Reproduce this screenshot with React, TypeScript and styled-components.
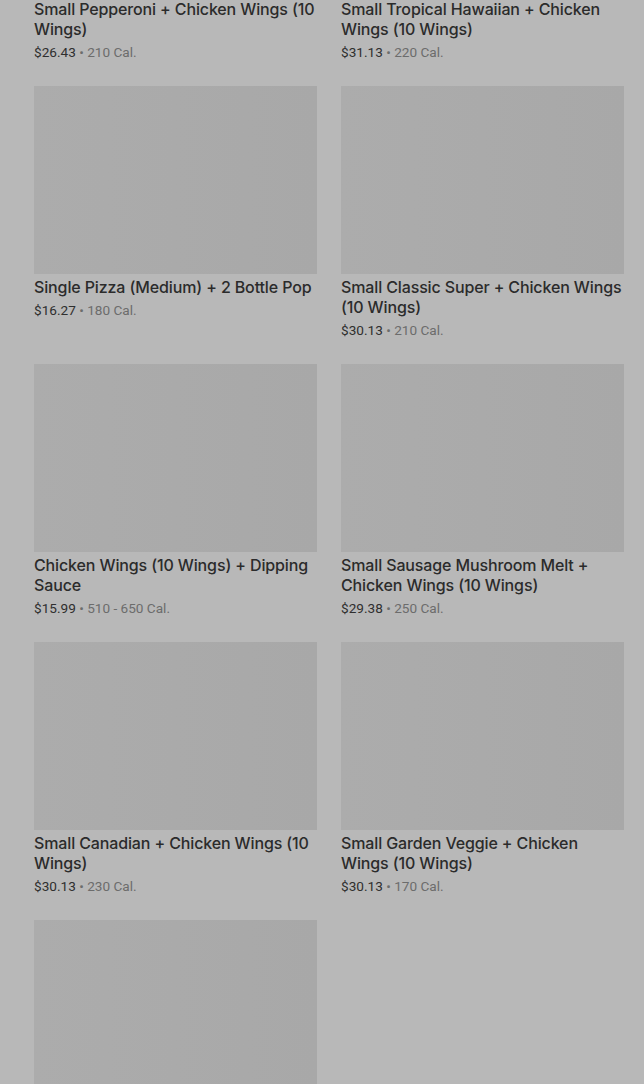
import React, { FC } from "react";
import styled, { createGlobalStyle } from "styled-components";

const GlobalStyle = createGlobalStyle`
  html, body {
    margin: 0;
    padding: 0;
    background: #b8b8b8;
    overflow: hidden;
  }
`;

const Page = styled.div`
  width: 644px;
  height: 1084px;
  overflow: hidden;
  background: #b8b8b8;
  font-family: Roboto, "Liberation Sans", sans-serif;
`;

const Grid = styled.ul`
  list-style: none;
  margin: -192px 0 0 0; /* page is scrolled, first row's pictures are above the fold */
  padding: 0 20px 0 34px;
  display: grid;
  grid-template-columns: 283px 283px;
  column-gap: 24px;
  row-gap: 24px;
  align-items: start;
`;

const Card = styled.li`
  display: flex;
  flex-direction: column;
`;

const Picture = styled.div`
  height: 188px;
  background: linear-gradient(90deg, #acacac 0%, #aaaaaa 50%, #a8a8a8 100%);
`;

const Title = styled.div`
  margin-top: 3px;
  font-family: Inter, Roboto, sans-serif;
  font-size: 16px;
  letter-spacing: -0.13px;
  line-height: 20px;
  font-weight: 500;
  color: #2b2b2b;
`;

const Meta = styled.div`
  margin-top: 3px;
  font-size: 13.6px;
  line-height: 20px;
  color: #6c6c6c;
  white-space: nowrap;
`;

const Price = styled.span`
  color: #2f2f2f;
`;

type Item = { name: string; price: string; cal: string };

const items: Item[] = [
  { name: "Small Pepperoni + Chicken Wings (10 Wings)", price: "$26.43", cal: "210 Cal." },
  { name: "Small Tropical Hawaiian + Chicken Wings (10 Wings)", price: "$31.13", cal: "220 Cal." },
  { name: "Single Pizza (Medium) + 2 Bottle Pop", price: "$16.27", cal: "180 Cal." },
  { name: "Small Classic Super + Chicken Wings (10 Wings)", price: "$30.13", cal: "210 Cal." },
  { name: "Chicken Wings (10 Wings) + Dipping Sauce", price: "$15.99", cal: "510 - 650 Cal." },
  { name: "Small Sausage Mushroom Melt + Chicken Wings (10 Wings)", price: "$29.38", cal: "250 Cal." },
  { name: "Small Canadian + Chicken Wings (10 Wings)", price: "$30.13", cal: "230 Cal." },
  { name: "Small Garden Veggie + Chicken Wings (10 Wings)", price: "$30.13", cal: "170 Cal." },
  { name: "", price: "", cal: "" },
];

const MenuCard: FC<{ item: Item }> = ({ item }) => (
  <Card>
    <Picture />
    {item.name && <Title>{item.name}</Title>}
    {item.price && (
      <Meta>
        <Price>{item.price}</Price> • {item.cal}
      </Meta>
    )}
  </Card>
);

const App: FC = () => (
  <Page>
    <GlobalStyle />
    <Grid>
      {items.map((it, i) => (
        <MenuCard key={i} item={it} />
      ))}
    </Grid>
  </Page>
);

export default App;
